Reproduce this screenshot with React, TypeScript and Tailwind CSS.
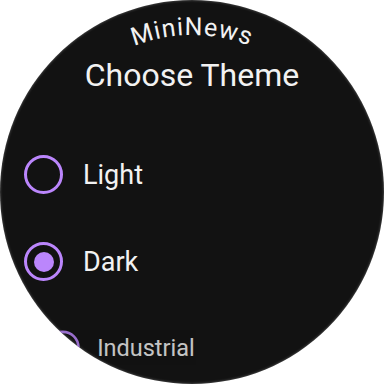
import { useState } from "react";

interface IThemeOption {
    id: string
    label: string
}

const themes: IThemeOption[] = [
    { id: "light", label: "Light" },
    { id: "dark", label: "Dark" },
    { id: "industrial", label: "Industrial" },
];

const CurvedTitle = ({ text }: { text: string }) => (
    <svg width="384" height="56" viewBox="0 0 384 56" className="block overflow-visible">
        <defs>
            <path id="title-arc" d="M 35 192 A 157 157 0 0 1 349 192" fill="none" />
        </defs>
        <text
            fill="#f2f2f2"
            fontSize="25"
            letterSpacing="1"
            style={{ fontFamily: "Roboto, 'Liberation Sans', sans-serif" }}
        >
            <textPath href="#title-arc" startOffset="50%" textAnchor="middle">
                {text}
            </textPath>
        </text>
    </svg>
);

const Radio = ({ checked }: { checked: boolean }) => (
    <span className="w-[39px] h-[39px] shrink-0 rounded-full border-[3.5px] border-[#bb86fc] flex items-center justify-center">
        {checked && <span className="w-[20px] h-[20px] rounded-full bg-[#bb86fc]" />}
    </span>
);

export default function App() {
    const [selected, setSelected] = useState("dark");

    return (
        <div className="w-[384px] h-[384px] bg-white" style={{ fontFamily: "Roboto, 'Liberation Sans', sans-serif" }}>
            <div className="w-[384px] h-[384px] rounded-full bg-[#121212] overflow-hidden flex flex-col items-center shadow-[inset_0_0_3px_rgba(255,255,255,0.35)]">
                <CurvedTitle text="MiniNews" />
                <h1 className="text-[32px] leading-[38px] text-[#f2f2f2] font-normal">Choose Theme</h1>

                <ul className="w-full mt-[37px] flex flex-col">
                    {themes.map((theme, index) => (
                        <li
                            key={theme.id}
                            className={`h-[87px] flex items-center pl-[24px] ${index === 2
                                ? "scale-[0.87] -translate-y-[1px] opacity-80"
                                : ""
                                }`}
                        >
                            <button
                                className="flex items-center gap-[20px] text-left"
                                onClick={() => setSelected(theme.id)}
                            >
                                <Radio checked={selected === theme.id} />
                                <span className="text-[27px] leading-[32px] text-[#f2f2f2]">{theme.label}</span>
                            </button>
                        </li>
                    ))}
                </ul>
            </div>
        </div>
    );
}
